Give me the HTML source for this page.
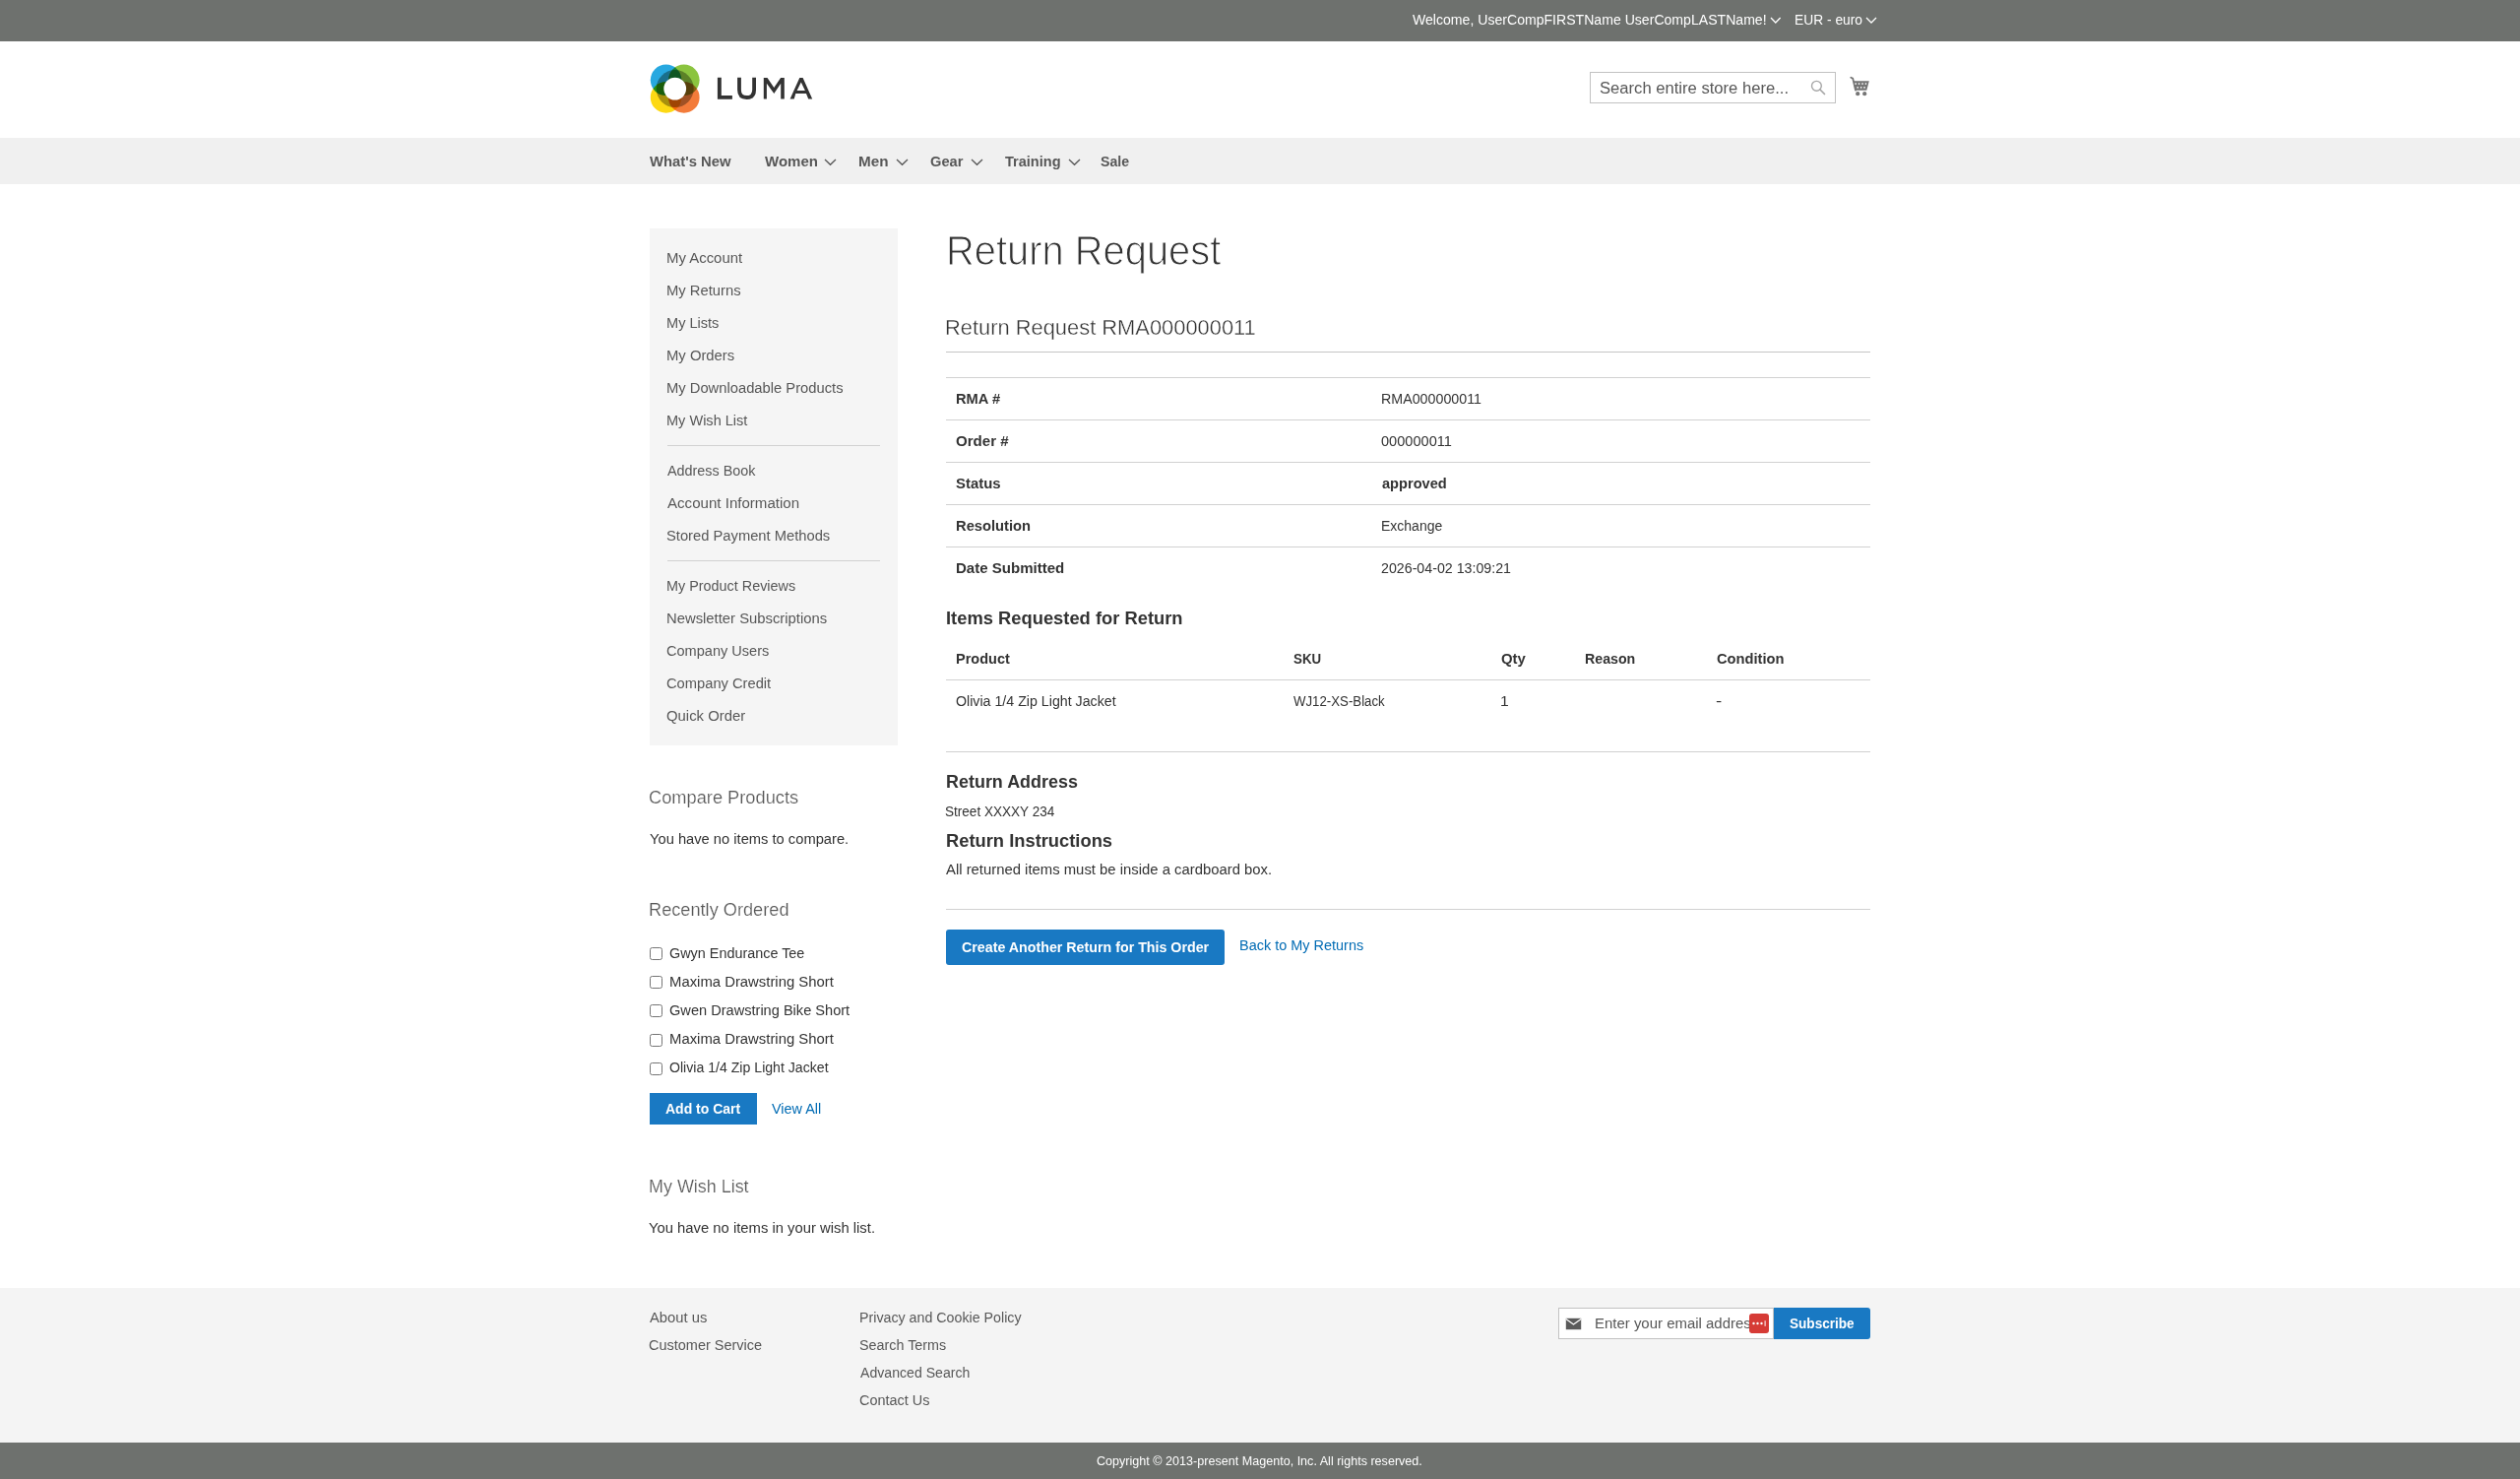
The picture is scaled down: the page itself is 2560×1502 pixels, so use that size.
<!DOCTYPE html>
<html><head><meta charset="utf-8"><title>Return Request</title>
<style>
html,body{margin:0;padding:0;background:#fff;}
body{width:2560px;height:1502px;position:relative;overflow:hidden;font-family:"Liberation Sans", sans-serif;}
</style></head><body>
<div style="position:absolute;left:0px;top:0px;width:2560px;height:42px;background:#6e716e;"></div><div style="position:absolute;left:1615px;top:73px;width:250px;height:32px;background:#fff;box-sizing:border-box;border:1px solid #c2c2c2"></div><div style="position:absolute;left:0px;top:140px;width:2560px;height:47px;background:#f0f0f0;"></div><div style="position:absolute;left:660px;top:232px;width:252px;height:525px;background:#f5f5f5;"></div><div style="position:absolute;left:678px;top:452px;width:216px;height:1px;background:#d1d1d1;"></div><div style="position:absolute;left:678px;top:569px;width:216px;height:1px;background:#d1d1d1;"></div><div style="position:absolute;left:660px;top:1110px;width:109px;height:32px;background:#1979c3;"></div><div style="position:absolute;left:961px;top:357px;width:939px;height:1px;background:#c6c6c6;"></div><div style="position:absolute;left:961px;top:383px;width:939px;height:1px;background:#d1d1d1;"></div><div style="position:absolute;left:961px;top:426px;width:939px;height:1px;background:#d1d1d1;"></div><div style="position:absolute;left:961px;top:469px;width:939px;height:1px;background:#d1d1d1;"></div><div style="position:absolute;left:961px;top:512px;width:939px;height:1px;background:#d1d1d1;"></div><div style="position:absolute;left:961px;top:555px;width:939px;height:1px;background:#d1d1d1;"></div><div style="position:absolute;left:961px;top:690px;width:939px;height:1px;background:#d1d1d1;"></div><div style="position:absolute;left:961px;top:763px;width:939px;height:1px;background:#d1d1d1;"></div><div style="position:absolute;left:961px;top:923px;width:939px;height:1px;background:#d1d1d1;"></div><div style="position:absolute;left:961px;top:944px;width:283px;height:36px;background:#1979c3;border-radius:3px"></div><div style="position:absolute;left:0px;top:1308px;width:2560px;height:157px;background:#f4f4f4;"></div><div style="position:absolute;left:1583px;top:1328px;width:219px;height:32px;background:#fff;box-sizing:border-box;border:1px solid #c2c2c2"></div><div style="position:absolute;left:1777px;top:1334px;width:20px;height:20px;background:#d63b36;border-radius:3px;z-index:2"></div><div style="position:absolute;left:1802px;top:1328px;width:98px;height:32px;background:#1979c3;border-radius:0 3px 3px 0"></div><div style="position:absolute;left:0px;top:1465px;width:2560px;height:37px;background:#6e716e;"></div>
<svg style="position:absolute;left:1797px;top:16px" width="13.6" height="9"><polyline points="2,2 6.8,7 11.6,2" fill="none" stroke="#fff" stroke-width="1.3"/></svg><svg style="position:absolute;left:1894px;top:16px" width="14" height="9"><polyline points="2,2 7.0,7 12,2" fill="none" stroke="#fff" stroke-width="1.3"/></svg><svg style="position:absolute;left:655px;top:60px" width="180" height="60" viewBox="655 60 180 60">
<g style="isolation:isolate">
<circle cx="676.6" cy="81.3" r="15.8" fill="#27a8e0" style="mix-blend-mode:multiply"/>
<circle cx="694.8" cy="81.3" r="15.8" fill="#8bc43f" style="mix-blend-mode:multiply"/>
<circle cx="676.6" cy="98.9" r="15.8" fill="#fdd914" style="mix-blend-mode:multiply"/>
<circle cx="694.8" cy="98.9" r="15.8" fill="#f37b3a" style="mix-blend-mode:multiply"/>
<circle cx="685.7" cy="90.1" r="19" fill="#a8a8a0" style="mix-blend-mode:multiply"/>
<circle cx="685.7" cy="90.1" r="11.4" fill="#fff"/>
</g>
<g fill="#333">
<path d="M728.9 78.7 H732.8 V97.1 H743.9 V100.7 H728.9 Z"/>
<path d="M775.8 100.4 V79 H779.5 L786.3 89 L793.1 79 H796.8 V100.4 H793.2 V84.7 L786.3 95 L778.9 84.7 V100.4 Z"/>
<path fill-rule="evenodd" d="M802.6 100.4 L812.3 79 H815.6 L825.2 100.4 H821.2 L819 95 H808.3 L806.7 100.4 Z M809.6 92.1 H817.9 L813.8 83.5 Z"/>
</g>
<path d="M751 78.7 V91.2 Q751 99 758.55 99 Q766.1 99 766.1 91.2 V78.7" fill="none" stroke="#333" stroke-width="3.8"/>
</svg><svg style="position:absolute;left:1835px;top:78px" width="24" height="24"><circle cx="10.4" cy="9.3" r="4.9" fill="none" stroke="#a6a6a6" stroke-width="1.4"/><line x1="14" y1="13" x2="18.5" y2="17.5" stroke="#a6a6a6" stroke-width="1.7" stroke-linecap="round"/></svg><svg style="position:absolute;left:1875px;top:74px" width="30" height="26" viewBox="1875 74 30 26">
<path d="M1880.3 78.7 L1882.2 79.6 L1885 91.6" fill="none" stroke="#757575" stroke-width="1.8" stroke-linecap="round"/>
<path d="M1882.6 82.2 H1898.8 L1896.3 91.8 H1884.8 Z" fill="#757575"/>
<g fill="#fff">
<rect x="1884.4" y="84.3" width="1.5" height="1.5"/><rect x="1887.8" y="84.3" width="1.5" height="1.5"/><rect x="1891.3" y="84.3" width="1.5" height="1.5"/><rect x="1894.7" y="84.3" width="1.5" height="1.5"/>
<rect x="1886.4" y="88.1" width="1.5" height="1.5"/><rect x="1889.9" y="88.1" width="1.5" height="1.5"/><rect x="1893.3" y="88.1" width="1.5" height="1.5"/>
</g>
<circle cx="1887.2" cy="95.2" r="2.1" fill="#757575"/><circle cx="1894.2" cy="95.2" r="2.1" fill="#757575"/>
</svg><svg style="position:absolute;left:836.3px;top:160px" width="15" height="9.3"><polyline points="2,2 7.5,7.3 13,2" fill="none" stroke="#575757" stroke-width="1.3"/></svg><svg style="position:absolute;left:909.2px;top:160px" width="15" height="9.3"><polyline points="2,2 7.5,7.3 13,2" fill="none" stroke="#575757" stroke-width="1.3"/></svg><svg style="position:absolute;left:984.9px;top:160px" width="15" height="9.3"><polyline points="2,2 7.5,7.3 13,2" fill="none" stroke="#575757" stroke-width="1.3"/></svg><svg style="position:absolute;left:1083.9px;top:160px" width="15" height="9.3"><polyline points="2,2 7.5,7.3 13,2" fill="none" stroke="#575757" stroke-width="1.3"/></svg><input type="checkbox" style="position:absolute;left:660px;top:962px;margin:0;width:13px;height:13px"><input type="checkbox" style="position:absolute;left:660px;top:991px;margin:0;width:13px;height:13px"><input type="checkbox" style="position:absolute;left:660px;top:1020px;margin:0;width:13px;height:13px"><input type="checkbox" style="position:absolute;left:660px;top:1050px;margin:0;width:13px;height:13px"><input type="checkbox" style="position:absolute;left:660px;top:1079px;margin:0;width:13px;height:13px"><svg style="position:absolute;left:1590px;top:1338px" width="18" height="13"><path d="M0.8 0.8 H16.2 V12.2 H0.8 Z" fill="#5a5a5a"/><path d="M0.8 1.5 L8.5 7 L16.2 1.5" fill="none" stroke="#fff" stroke-width="1.3"/></svg><svg style="position:absolute;left:1777px;top:1334px;z-index:3" width="20" height="20"><circle cx="4.5" cy="10" r="1.2" fill="#fff"/><circle cx="8.5" cy="10" r="1.2" fill="#fff"/><circle cx="12.5" cy="10" r="1.2" fill="#fff"/><rect x="15.6" y="7.2" width="1" height="5.6" fill="#fff"/></svg>
<div id="t0" style="position:absolute;left:1435.00px;top:13px;font-size:14px;line-height:14px;font-weight:400;color:#fff;white-space:nowrap;transform:scaleX(1.0056);transform-origin:0 0;">Welcome, UserCompFIRSTName UserCompLASTName!</div><div id="t1" style="position:absolute;left:1823.01px;top:13px;font-size:14px;line-height:14px;font-weight:400;color:#fff;white-space:nowrap;transform:scaleX(0.9855);transform-origin:0 0;">EUR - euro</div><div id="t2" style="position:absolute;left:1624.98px;top:82px;font-size:16px;line-height:16px;font-weight:400;color:#575757;white-space:nowrap;transform:scaleX(1.0383);transform-origin:0 0;">Search entire store here...</div><div id="t3" style="position:absolute;left:660.00px;top:156.6px;font-size:14px;line-height:14px;font-weight:700;color:#575757;white-space:nowrap;transform:scaleX(1.0590);transform-origin:0 0;">What's New</div><div id="t4" style="position:absolute;left:776.58px;top:156.6px;font-size:14px;line-height:14px;font-weight:700;color:#575757;white-space:nowrap;transform:scaleX(1.0735);transform-origin:0 0;">Women</div><div id="t5" style="position:absolute;left:872.16px;top:156.6px;font-size:14px;line-height:14px;font-weight:700;color:#575757;white-space:nowrap;transform:scaleX(1.0889);transform-origin:0 0;">Men</div><div id="t6" style="position:absolute;left:944.76px;top:156.6px;font-size:14px;line-height:14px;font-weight:700;color:#575757;white-space:nowrap;transform:scaleX(1.0452);transform-origin:0 0;">Gear</div><div id="t7" style="position:absolute;left:1020.61px;top:156.6px;font-size:14px;line-height:14px;font-weight:700;color:#575757;white-space:nowrap;transform:scaleX(1.0389);transform-origin:0 0;">Training</div><div id="t8" style="position:absolute;left:1118.38px;top:156.6px;font-size:14px;line-height:14px;font-weight:700;color:#575757;white-space:nowrap;transform:scaleX(1.0107);transform-origin:0 0;">Sale</div><div id="t9" style="position:absolute;left:676.93px;top:255.2px;font-size:14px;line-height:14px;font-weight:400;color:#575757;white-space:nowrap;transform:scaleX(1.0662);transform-origin:0 0;">My Account</div><div id="t10" style="position:absolute;left:676.94px;top:288.2px;font-size:14px;line-height:14px;font-weight:400;color:#575757;white-space:nowrap;transform:scaleX(1.0557);transform-origin:0 0;">My Returns</div><div id="t11" style="position:absolute;left:676.96px;top:321.1px;font-size:14px;line-height:14px;font-weight:400;color:#575757;white-space:nowrap;transform:scaleX(1.0400);transform-origin:0 0;">My Lists</div><div id="t12" style="position:absolute;left:676.94px;top:354px;font-size:14px;line-height:14px;font-weight:400;color:#575757;white-space:nowrap;transform:scaleX(1.0594);transform-origin:0 0;">My Orders</div><div id="t13" style="position:absolute;left:676.95px;top:387px;font-size:14px;line-height:14px;font-weight:400;color:#575757;white-space:nowrap;transform:scaleX(1.0533);transform-origin:0 0;">My Downloadable Products</div><div id="t14" style="position:absolute;left:676.96px;top:420px;font-size:14px;line-height:14px;font-weight:400;color:#575757;white-space:nowrap;transform:scaleX(1.0385);transform-origin:0 0;">My Wish List</div><div id="t15" style="position:absolute;left:678.00px;top:470.8px;font-size:14px;line-height:14px;font-weight:400;color:#575757;white-space:nowrap;transform:scaleX(1.0253);transform-origin:0 0;">Address Book</div><div id="t16" style="position:absolute;left:678.00px;top:503.70000000000005px;font-size:14px;line-height:14px;font-weight:400;color:#575757;white-space:nowrap;transform:scaleX(1.0774);transform-origin:0 0;">Account Information</div><div id="t17" style="position:absolute;left:676.95px;top:536.6px;font-size:14px;line-height:14px;font-weight:400;color:#575757;white-space:nowrap;transform:scaleX(1.0522);transform-origin:0 0;">Stored Payment Methods</div><div id="t18" style="position:absolute;left:676.97px;top:588px;font-size:14px;line-height:14px;font-weight:400;color:#575757;white-space:nowrap;transform:scaleX(1.0278);transform-origin:0 0;">My Product Reviews</div><div id="t19" style="position:absolute;left:676.94px;top:620.8px;font-size:14px;line-height:14px;font-weight:400;color:#575757;white-space:nowrap;transform:scaleX(1.0588);transform-origin:0 0;">Newsletter Subscriptions</div><div id="t20" style="position:absolute;left:676.96px;top:653.8px;font-size:14px;line-height:14px;font-weight:400;color:#575757;white-space:nowrap;transform:scaleX(1.0394);transform-origin:0 0;">Company Users</div><div id="t21" style="position:absolute;left:676.95px;top:686.6px;font-size:14px;line-height:14px;font-weight:400;color:#575757;white-space:nowrap;transform:scaleX(1.0500);transform-origin:0 0;">Company Credit</div><div id="t22" style="position:absolute;left:676.94px;top:719.6px;font-size:14px;line-height:14px;font-weight:400;color:#575757;white-space:nowrap;transform:scaleX(1.0622);transform-origin:0 0;">Quick Order</div><div id="t23" style="position:absolute;left:658.77px;top:800.7px;font-size:18px;line-height:18px;font-weight:400;color:#575757;white-space:nowrap;transform:scaleX(1.0135);transform-origin:0 0;-webkit-text-stroke:0.2px #fff;">Compare Products</div><div id="t24" style="position:absolute;left:659.76px;top:844.8px;font-size:14px;line-height:14px;font-weight:400;color:#333;white-space:nowrap;transform:scaleX(1.0503);transform-origin:0 0;">You have no items to compare.</div><div id="t25" style="position:absolute;left:658.77px;top:915.4px;font-size:18px;line-height:18px;font-weight:400;color:#575757;white-space:nowrap;transform:scaleX(1.0101);transform-origin:0 0;-webkit-text-stroke:0.2px #fff;">Recently Ordered</div><div id="t26" style="position:absolute;left:679.58px;top:960.6px;font-size:14px;line-height:14px;font-weight:400;color:#333;white-space:nowrap;transform:scaleX(1.0280);transform-origin:0 0;">Gwyn Endurance Tee</div><div id="t27" style="position:absolute;left:679.55px;top:989.6px;font-size:14px;line-height:14px;font-weight:400;color:#333;white-space:nowrap;transform:scaleX(1.0615);transform-origin:0 0;">Maxima Drawstring Short</div><div id="t28" style="position:absolute;left:679.57px;top:1018.8px;font-size:14px;line-height:14px;font-weight:400;color:#333;white-space:nowrap;transform:scaleX(1.0417);transform-origin:0 0;">Gwen Drawstring Bike Short</div><div id="t29" style="position:absolute;left:679.55px;top:1048px;font-size:14px;line-height:14px;font-weight:400;color:#333;white-space:nowrap;transform:scaleX(1.0615);transform-origin:0 0;">Maxima Drawstring Short</div><div id="t30" style="position:absolute;left:679.59px;top:1077px;font-size:14px;line-height:14px;font-weight:400;color:#333;white-space:nowrap;transform:scaleX(1.0081);transform-origin:0 0;">Olivia 1/4 Zip Light Jacket</div><div id="t31" style="position:absolute;left:676.00px;top:1118.5px;font-size:14px;line-height:14px;font-weight:700;color:#fff;white-space:nowrap;transform:scaleX(1.0000);transform-origin:0 0;">Add to Cart</div><div id="t32" style="position:absolute;left:783.59px;top:1118.5px;font-size:14px;line-height:14px;font-weight:400;color:#006bb4;white-space:nowrap;transform:scaleX(1.0292);transform-origin:0 0;">View All</div><div id="t33" style="position:absolute;left:658.80px;top:1195.8px;font-size:18px;line-height:18px;font-weight:400;color:#575757;white-space:nowrap;transform:scaleX(0.9960);transform-origin:0 0;-webkit-text-stroke:0.2px #fff;">My Wish List</div><div id="t34" style="position:absolute;left:658.94px;top:1240.4px;font-size:14px;line-height:14px;font-weight:400;color:#333;white-space:nowrap;transform:scaleX(1.0581);transform-origin:0 0;">You have no items in your wish list.</div><div id="t35" style="position:absolute;left:960.58px;top:233.89999999999998px;font-size:42px;line-height:42px;font-weight:400;color:#333;white-space:nowrap;transform:scaleX(0.9493);transform-origin:0 0;-webkit-text-stroke:1.1px #fff;">Return Request</div><div id="t36" style="position:absolute;left:959.81px;top:322.4px;font-size:22px;line-height:22px;font-weight:400;color:#333;white-space:nowrap;transform:scaleX(0.9943);transform-origin:0 0;-webkit-text-stroke:0.35px #fff;">Return Request RMA000000011</div><div id="t37" style="position:absolute;left:970.95px;top:397.7px;font-size:14px;line-height:14px;font-weight:700;color:#333;white-space:nowrap;transform:scaleX(1.0476);transform-origin:0 0;">RMA #</div><div id="t38" style="position:absolute;left:1402.98px;top:397.7px;font-size:14px;line-height:14px;font-weight:400;color:#333;white-space:nowrap;transform:scaleX(1.0184);transform-origin:0 0;">RMA000000011</div><div id="t39" style="position:absolute;left:970.92px;top:440.7px;font-size:14px;line-height:14px;font-weight:700;color:#333;white-space:nowrap;transform:scaleX(1.0776);transform-origin:0 0;">Order #</div><div id="t40" style="position:absolute;left:1402.96px;top:440.7px;font-size:14px;line-height:14px;font-weight:400;color:#333;white-space:nowrap;transform:scaleX(1.0410);transform-origin:0 0;">000000011</div><div id="t41" style="position:absolute;left:970.94px;top:483.7px;font-size:14px;line-height:14px;font-weight:700;color:#333;white-space:nowrap;transform:scaleX(1.0634);transform-origin:0 0;">Status</div><div id="t42" style="position:absolute;left:1404.00px;top:483.7px;font-size:14px;line-height:14px;font-weight:700;color:#333;white-space:nowrap;transform:scaleX(1.0435);transform-origin:0 0;">approved</div><div id="t43" style="position:absolute;left:970.95px;top:526.7px;font-size:14px;line-height:14px;font-weight:700;color:#333;white-space:nowrap;transform:scaleX(1.0514);transform-origin:0 0;">Resolution</div><div id="t44" style="position:absolute;left:1403.00px;top:526.7px;font-size:14px;line-height:14px;font-weight:400;color:#333;white-space:nowrap;transform:scaleX(1.0000);transform-origin:0 0;">Exchange</div><div id="t45" style="position:absolute;left:970.93px;top:569.7px;font-size:14px;line-height:14px;font-weight:700;color:#333;white-space:nowrap;transform:scaleX(1.0743);transform-origin:0 0;">Date Submitted</div><div id="t46" style="position:absolute;left:1402.98px;top:569.7px;font-size:14px;line-height:14px;font-weight:400;color:#333;white-space:nowrap;transform:scaleX(1.0156);transform-origin:0 0;">2026-04-02 13:09:21</div><div id="t47" style="position:absolute;left:961.37px;top:618.6px;font-size:18px;line-height:18px;font-weight:700;color:#333;white-space:nowrap;transform:scaleX(1.0192);transform-origin:0 0;">Items Requested for Return</div><div id="t48" style="position:absolute;left:970.96px;top:661.8px;font-size:14px;line-height:14px;font-weight:700;color:#333;white-space:nowrap;transform:scaleX(1.0365);transform-origin:0 0;">Product</div><div id="t49" style="position:absolute;left:1314.02px;top:661.8px;font-size:14px;line-height:14px;font-weight:700;color:#333;white-space:nowrap;transform:scaleX(0.9536);transform-origin:0 0;">SKU</div><div id="t50" style="position:absolute;left:1525.37px;top:661.8px;font-size:14px;line-height:14px;font-weight:700;color:#333;white-space:nowrap;transform:scaleX(1.0652);transform-origin:0 0;">Qty</div><div id="t51" style="position:absolute;left:1609.99px;top:661.8px;font-size:14px;line-height:14px;font-weight:700;color:#333;white-space:nowrap;transform:scaleX(1.0143);transform-origin:0 0;">Reason</div><div id="t52" style="position:absolute;left:1743.56px;top:661.8px;font-size:14px;line-height:14px;font-weight:700;color:#333;white-space:nowrap;transform:scaleX(1.0484);transform-origin:0 0;">Condition</div><div id="t53" style="position:absolute;left:970.99px;top:704.5px;font-size:14px;line-height:14px;font-weight:400;color:#333;white-space:nowrap;transform:scaleX(1.0145);transform-origin:0 0;">Olivia 1/4 Zip Light Jacket</div><div id="t54" style="position:absolute;left:1314.03px;top:704.5px;font-size:14px;line-height:14px;font-weight:400;color:#333;white-space:nowrap;transform:scaleX(0.9454);transform-origin:0 0;">WJ12-XS-Black</div><div id="t55" style="position:absolute;left:1524.23px;top:704.5px;font-size:14px;line-height:14px;font-weight:400;color:#333;white-space:nowrap;transform:scaleX(1.1167);transform-origin:0 0;">1</div><div id="t56" style="position:absolute;left:1743.36px;top:704.5px;font-size:14px;line-height:14px;font-weight:400;color:#333;white-space:nowrap;transform:scaleX(1.3333);transform-origin:0 0;">-</div><div id="t57" style="position:absolute;left:961.00px;top:785.2px;font-size:18px;line-height:18px;font-weight:700;color:#333;white-space:nowrap;transform:scaleX(0.9970);transform-origin:0 0;">Return Address</div><div id="t58" style="position:absolute;left:960.24px;top:816.8px;font-size:14px;line-height:14px;font-weight:400;color:#333;white-space:nowrap;transform:scaleX(0.9681);transform-origin:0 0;">Street XXXXY 234</div><div id="t59" style="position:absolute;left:960.98px;top:845px;font-size:18px;line-height:18px;font-weight:700;color:#333;white-space:nowrap;transform:scaleX(1.0183);transform-origin:0 0;">Return Instructions</div><div id="t60" style="position:absolute;left:961.17px;top:875.7px;font-size:14px;line-height:14px;font-weight:400;color:#333;white-space:nowrap;transform:scaleX(1.0613);transform-origin:0 0;">All returned items must be inside a cardboard box.</div><div id="t61" style="position:absolute;left:977.38px;top:955px;font-size:14px;line-height:14px;font-weight:700;color:#fff;white-space:nowrap;transform:scaleX(1.0175);transform-origin:0 0;">Create Another Return for This Order</div><div id="t62" style="position:absolute;left:1258.56px;top:953px;font-size:14px;line-height:14px;font-weight:400;color:#006bb4;white-space:nowrap;transform:scaleX(1.0331);transform-origin:0 0;">Back to My Returns</div><div id="t63" style="position:absolute;left:660.00px;top:1330.9px;font-size:14px;line-height:14px;font-weight:400;color:#575757;white-space:nowrap;transform:scaleX(1.0545);transform-origin:0 0;">About us</div><div id="t64" style="position:absolute;left:658.97px;top:1358.8px;font-size:14px;line-height:14px;font-weight:400;color:#575757;white-space:nowrap;transform:scaleX(1.0345);transform-origin:0 0;">Customer Service</div><div id="t65" style="position:absolute;left:873.37px;top:1330.9px;font-size:14px;line-height:14px;font-weight:400;color:#575757;white-space:nowrap;transform:scaleX(1.0168);transform-origin:0 0;">Privacy and Cookie Policy</div><div id="t66" style="position:absolute;left:873.37px;top:1358.8px;font-size:14px;line-height:14px;font-weight:400;color:#575757;white-space:nowrap;transform:scaleX(1.0247);transform-origin:0 0;">Search Terms</div><div id="t67" style="position:absolute;left:874.39px;top:1386.6px;font-size:14px;line-height:14px;font-weight:400;color:#575757;white-space:nowrap;transform:scaleX(1.0073);transform-origin:0 0;">Advanced Search</div><div id="t68" style="position:absolute;left:873.36px;top:1414.9px;font-size:14px;line-height:14px;font-weight:400;color:#575757;white-space:nowrap;transform:scaleX(1.0309);transform-origin:0 0;">Contact Us</div><div id="t69" style="position:absolute;left:1619.52px;top:1336.6px;font-size:14px;line-height:14px;font-weight:400;color:#575757;white-space:nowrap;transform:scaleX(1.0680);transform-origin:0 0;">Enter your email addres</div><div id="t70" style="position:absolute;left:1818.21px;top:1336.6px;font-size:14px;line-height:14px;font-weight:700;color:#fff;white-space:nowrap;transform:scaleX(0.9701);transform-origin:0 0;">Subscribe</div><div id="t71" style="position:absolute;left:1114.35px;top:1477.6px;font-size:12px;line-height:12px;font-weight:400;color:#fff;white-space:nowrap;transform:scaleX(1.0481);transform-origin:0 0;">Copyright © 2013-present Magento, Inc. All rights reserved.</div>
</body></html>
